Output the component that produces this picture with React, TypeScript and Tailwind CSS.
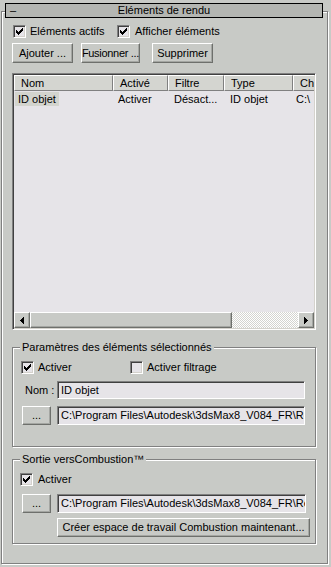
import React from "react";

const BG = "bg-[#c8cac6]";

function Check({ checked }: { checked: boolean }) {
  return (
    <div className="w-[13px] h-[13px] shrink-0 border border-t-[#808080] border-l-[#808080] border-r-white border-b-white shadow-[inset_1px_1px_0_#404040,inset_-1px_-1px_0_#d4d2cc] bg-[#e6e4e8] flex items-center justify-center">
      {checked && (
        <svg width="7" height="7" viewBox="0 0 7 7" shapeRendering="crispEdges">
          <rect x="6" y="0" width="1" height="3" fill="#000" />
          <rect x="5" y="1" width="1" height="3" fill="#000" />
          <rect x="4" y="2" width="1" height="3" fill="#000" />
          <rect x="3" y="3" width="1" height="3" fill="#000" />
          <rect x="2" y="4" width="1" height="3" fill="#000" />
          <rect x="1" y="3" width="1" height="3" fill="#000" />
          <rect x="0" y="2" width="1" height="3" fill="#000" />
        </svg>
      )}
    </div>
  );
}

function Btn({ children, w, h = 20, cls = "" }: { children: React.ReactNode; w: number; h?: number; cls?: string }) {
  return (
    <div
      className={`shrink-0 flex items-center justify-center whitespace-nowrap overflow-hidden border border-t-white border-l-white border-r-[#6e706c] border-b-[#6e706c] shadow-[inset_-1px_-1px_0_#a4a6a2] ${BG} ${cls}`}
      style={{ width: w, height: h }}
    >
      {children}
    </div>
  );
}

function Field({ children, w, h }: { children: React.ReactNode; w: number; h: number }) {
  return (
    <div
      className="shrink-0 flex items-center overflow-hidden whitespace-nowrap border border-t-[#808080] border-l-[#808080] border-r-white border-b-white shadow-[inset_1px_1px_0_#404040] bg-[#e6e4e8] pl-[3px]"
      style={{ width: w, height: h }}
    >
      {children}
    </div>
  );
}

function Group({ label, h, children, mt }: { label: string; h: number; children: React.ReactNode; mt: string }) {
  return (
    <div
      className={`relative w-[304px] border border-[#808080] shadow-[inset_1px_1px_0_#fff,1px_1px_0_#fff] ${mt}`}
      style={{ height: h }}
    >
      <div className={`absolute left-[7px] top-[-8px] px-[2px] leading-[14px] whitespace-nowrap ${BG}`}>{label}</div>
      {children}
    </div>
  );
}

const path = "C:\\Program Files\\Autodesk\\3dsMax8_V084_FR\\Rendus\\ID objet.rpf";

export default function App() {
  return (
    <div
      className={`w-[331px] h-[567px] ${BG} text-black text-[11px] leading-[13px] pt-[11px] pl-[1px] overflow-hidden`}
      style={{ fontFamily: '"Liberation Sans", Arial, sans-serif' }}
    >
      <div className="w-[327px] h-[553px] border border-[#808080] shadow-[inset_1px_1px_0_#fff,1px_1px_0_#fff]">
        {/* title bar */}
        <div className="-mt-[9px] ml-[3px] w-[318px] h-[15px] border border-black bg-[#b4b6b2] relative flex items-center justify-center">
          <span className="absolute left-[4px] top-[0px] leading-[12px]">–</span>
          <span className="leading-[13px]">Eléments de rendu</span>
        </div>

        <div className="pl-[10px]">
          {/* checkbox row */}
          <div className="mt-[7px] flex items-center h-[13px]">
            <div className="ml-[1px] w-[104px] flex items-center gap-[4px]">
              <Check checked />
              <span>Eléments actifs</span>
            </div>
            <div className="flex items-center gap-[5px]">
              <Check checked />
              <span>Afficher éléments</span>
            </div>
          </div>

          {/* buttons */}
          <div className="mt-[5px] flex">
            <Btn w={61}>Ajouter ...</Btn>
            <Btn w={59} cls="ml-[8px] tracking-[-0.3px]">Fusionner ...</Btn>
            <Btn w={61} cls="ml-[12px]">Supprimer</Btn>
          </div>

          {/* list view */}
          <div className="mt-[10px] w-[304px] h-[257px] border border-t-[#808080] border-l-[#808080] border-r-white border-b-white shadow-[inset_1px_1px_0_#404040,inset_-1px_-1px_0_#d4d2cc] bg-[#e6e4e8] p-[1px] flex flex-col overflow-hidden">
            <div className="flex h-[16px] shrink-0 whitespace-nowrap overflow-hidden">
              {[
                ["Nom", 99],
                ["Activé", 55],
                ["Filtre", 56],
                ["Type", 69],
                ["Chemin", 60],
              ].map(([t, w]) => (
                <div
                  key={t as string}
                  className="shrink-0 h-[16px] pl-[6px] flex items-center border border-t-white border-l-white border-r-[#808080] border-b-[#808080] bg-[#d4d5d0]"
                  style={{ width: w as number }}
                >
                  {t}
                </div>
              ))}
            </div>
            <div className="flex h-[16px] shrink-0 items-center whitespace-nowrap overflow-hidden">
              <div className="w-[99px] shrink-0 pl-[1px]">
                <span className="bg-[#d3d4ce] px-[3px] py-[1px]">ID objet</span>
              </div>
              <div className="w-[55px] shrink-0 pl-[5px]">Activer</div>
              <div className="w-[56px] shrink-0 pl-[6px]">Désact...</div>
              <div className="w-[69px] shrink-0 pl-[6px]">ID objet</div>
              <div className="w-[60px] shrink-0 pl-[3px]">C:\</div>
            </div>
            <div className="flex-1" />
            {/* horizontal scrollbar */}
            <div className="flex h-[16px] shrink-0">
              <Btn w={16} h={16}>
                <svg width="4" height="7" viewBox="0 0 4 7" shapeRendering="crispEdges">
                  <path d="M4 0 L0 3.5 L4 7 Z" fill="#000" />
                </svg>
              </Btn>
              <Btn w={202} h={16}>{""}</Btn>
              <div className="flex-1 bg-[repeating-conic-gradient(#ffffff_0_25%,#d4d4d0_0_50%)] bg-[length:2px_2px]" />
              <Btn w={16} h={16}>
                <svg width="4" height="7" viewBox="0 0 4 7" shapeRendering="crispEdges">
                  <path d="M0 0 L4 3.5 L0 7 Z" fill="#000" />
                </svg>
              </Btn>
            </div>
          </div>

          {/* group 1 */}
          <Group label="Paramètres des éléments sélectionnés" h={100} mt="mt-[17px]">
            <div className="mt-[13px] ml-[8px] flex items-center h-[13px]">
              <div className="w-[109px] flex items-center gap-[4px]">
                <Check checked />
                <span>Activer</span>
              </div>
              <div className="flex items-center gap-[4px]">
                <Check checked={false} />
                <span>Activer filtrage</span>
              </div>
            </div>
            <div className="mt-[7px] flex items-center h-[18px]">
              <span className="ml-[12px] w-[32px]">Nom :</span>
              <Field w={248} h={18}>ID objet</Field>
            </div>
            <div className="mt-[7px] flex items-center">
              <Btn w={29} h={19} cls="ml-[9px]">...</Btn>
              <div className="w-[6px]" />
              <Field w={248} h={19}>{path}</Field>
            </div>
          </Group>

          {/* group 2 */}
          <Group label="Sortie versCombustion™" h={85} mt="mt-[12px]">
            <div className="mt-[13px] ml-[7px] flex items-center h-[13px] gap-[5px]">
              <Check checked />
              <span>Activer</span>
            </div>
            <div className="mt-[8px] flex items-center">
              <Btn w={29} h={19} cls="ml-[9px]">...</Btn>
              <div className="w-[6px]" />
              <Field w={249} h={19}>{path}</Field>
            </div>
            <div className="mt-[5px] flex">
              <Btn w={253} h={19} cls="ml-[44px]">Créer espace de travail Combustion maintenant...</Btn>
            </div>
          </Group>
        </div>
      </div>
    </div>
  );
}
